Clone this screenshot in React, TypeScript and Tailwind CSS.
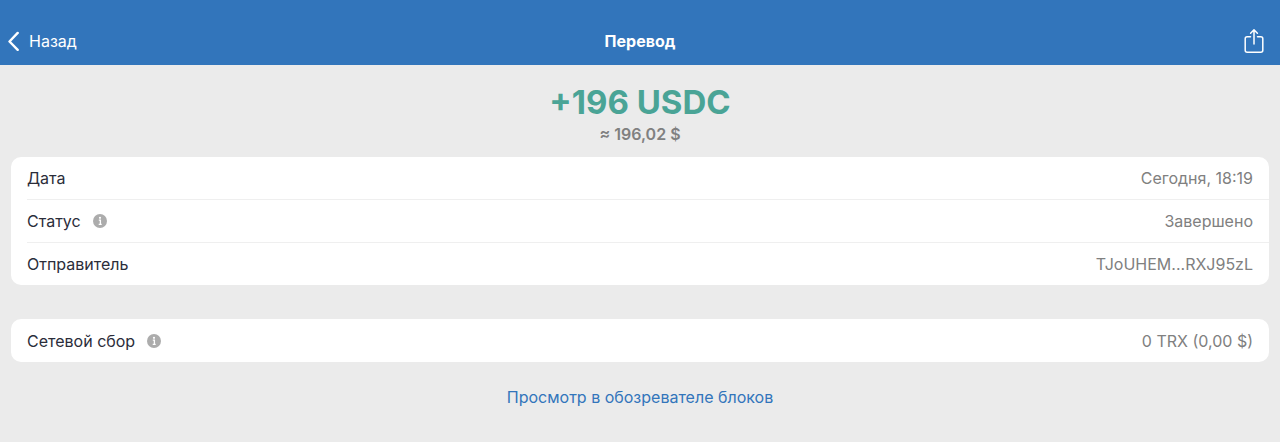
import type { ReactNode } from "react";

interface RowProps {
  label: string;
  value: string;
  info?: boolean;
}

function InfoIcon() {
  return (
    <svg width="14" height="14" viewBox="0 0 14 14" aria-hidden="true">
      <circle cx="7" cy="7" r="7" fill="#acacac" />
      <circle cx="7" cy="3.8" r="1.1" fill="#fff" />
      <path d="M5.8 6.2h1.6v4M5.7 10.3h3" fill="none" stroke="#fff" strokeWidth="1.3" />
    </svg>
  );
}

function Card({ children }: { children: ReactNode }) {
  return <dl className="rounded-[10px] bg-white pl-4">{children}</dl>;
}

function Row({ label, value, info }: RowProps) {
  return (
    <div className="flex h-[43px] items-center justify-between border-b border-[#efefef] pr-4 last:h-[42px] last:border-b-0 only:h-[43px]">
      <dt className="flex items-center gap-3 text-[#2b2d3a]">
        {label}
        {info && (
          <button type="button" aria-label={label}>
            <InfoIcon />
          </button>
        )}
      </dt>
      <dd className="text-[#808080]">{value}</dd>
    </div>
  );
}

export default function App() {
  return (
    <div className="min-h-screen bg-[#ebebeb] font-['Inter',sans-serif] text-base">
      <header className="grid grid-cols-3 items-center bg-[#3275bb] px-2 pt-[17px] text-white">
        <button type="button" className="flex h-12 items-center gap-[10px] justify-self-start">
          <svg width="11" height="20" viewBox="0 0 11 20" fill="none" aria-hidden="true">
            <path d="M9.7 1.9L1.5 10.5l8.2 8.3" stroke="currentColor" strokeWidth="2.4" strokeLinecap="round" strokeLinejoin="round" />
          </svg>
          Назад
        </button>
        <h1 className="text-center font-bold">Перевод</h1>
        <button type="button" aria-label="Поделиться" className="mr-2 justify-self-end">
          <svg width="20" height="26" viewBox="0 0 20 26" fill="none" stroke="currentColor" strokeWidth="1.5" strokeLinecap="round" strokeLinejoin="round" aria-hidden="true">
            <path d="M6.5 8.7H3.2a2 2 0 0 0-2 2v11.6a2 2 0 0 0 2 2h13.6a2 2 0 0 0 2-2V10.7a2 2 0 0 0-2-2h-3.3" />
            <path d="M10 16V2M6.6 5.2L10 1.8l3.4 3.4" />
          </svg>
        </button>
      </header>

      <main className="px-[11px]">
        <div className="flex flex-col items-center pt-[17px] pb-[11px]">
          <p className="text-[33px] leading-10 font-bold text-[#4aa496]">+196 USDC</p>
          <p className="leading-6 font-semibold text-[#808080]">≈ 196,02 $</p>
        </div>

        <div className="flex flex-col gap-[34px]">
          <Card>
            <Row label="Дата" value="Сегодня, 18:19" />
            <Row label="Статус" value="Завершено" info />
            <Row label="Отправитель" value="TJoUHEM...RXJ95zL" />
          </Card>
          <Card>
            <Row label="Сетевой сбор" value="0 TRX (0,00 $)" info />
          </Card>
        </div>

        <div className="flex justify-center py-[23px]">
          <a href="#explorer" className="text-[#3275bb]">
            Просмотр в обозревателе блоков
          </a>
        </div>
      </main>
    </div>
  );
}
